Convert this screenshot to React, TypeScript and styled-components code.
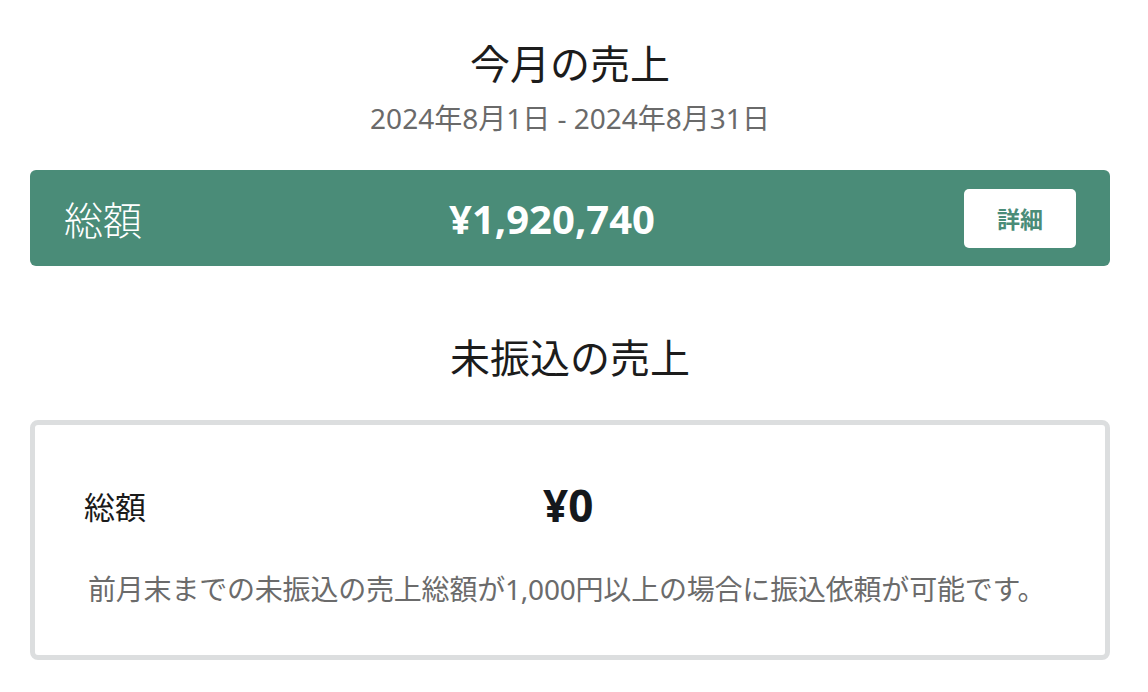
import styled, { createGlobalStyle } from "styled-components"

const GlobalStyle = createGlobalStyle`
  body {
    margin: 0;
    background: #ffffff;
    font-family: "Noto Sans", "Noto Sans CJK JP", sans-serif;
    color: #1a1a1a;
  }
`

const Page = styled.div`
  width: 1148px;
  height: 692px;
  box-sizing: border-box;
  padding: 0 38px 0 30px;
  display: flex;
  flex-direction: column;
  overflow: hidden;
`

const Section = styled.section<{ $top: number }>`
  display: flex;
  flex-direction: column;
  align-items: center;
  margin-top: ${(p) => p.$top}px;
`

const Title = styled.h1`
  margin: 0;
  font-size: 40px;
  font-weight: 400;
  line-height: 48px;
  color: #1c1c1c;
  font-family: "Noto Sans CJK JP", sans-serif;
`

const Period = styled.div`
  margin-top: 15px;
  font-size: 28px;
  line-height: 34px;
  color: #6a6a6a;
`

const TotalBar = styled.div`
  align-self: stretch;
  margin-top: 35px;
  height: 96px;
  border-radius: 6px;
  background: #4a8c78;
  display: grid;
  grid-template-columns: 1fr auto 1fr;
  align-items: center;
  padding: 0 34px;
  color: #ffffff;
`

const BarLabel = styled.span`
  font-family: "Noto Sans CJK JP", sans-serif;
  font-size: 39px;
  font-weight: 300;
`

const BarAmount = styled.span`
  font-size: 40px;
  font-weight: 700;
  transform: translateX(-18px);
`

const DetailButton = styled.button`
  justify-self: end;
  width: 112px;
  height: 59px;
  border: none;
  border-radius: 5px;
  background: #ffffff;
  color: #4a8c78;
  font-family: "Noto Sans CJK JP", sans-serif;
  font-size: 23px;
  font-weight: 700;
`

const Card = styled.div`
  align-self: stretch;
  margin-top: 40px;
  height: 240px;
  box-sizing: border-box;
  border: 5px solid #dcdedf;
  border-radius: 8px;
  padding: 50px 49px 0 49px;
`

const Row = styled.div`
  display: grid;
  grid-template-columns: 459px auto;
  align-items: center;
  height: 48px;
`

const RowLabel = styled.span`
  font-family: "Noto Sans CJK JP", sans-serif;
  font-size: 31px;
  color: #1a1a1a;
`

const RowValue = styled.span`
  font-size: 44px;
  font-weight: 700;
  color: #14181c;
`

const Note = styled.p`
  margin: 48px 0 0 4px;
  font-size: 28px;
  line-height: 36px;
  color: #6b6b6b;
  letter-spacing: -0.2px;
`

export default function App() {
  return (
    <>
      <GlobalStyle />
      <Page>
        <Section $top={38}>
          <Title>今月の売上</Title>
          <Period>2024年8月1日 - 2024年8月31日</Period>
        </Section>
        <TotalBar>
          <BarLabel>総額</BarLabel>
          <BarAmount>¥1,920,740</BarAmount>
          <DetailButton>詳細</DetailButton>
        </TotalBar>
        <Section $top={66}>
          <Title>未振込の売上</Title>
        </Section>
        <Card>
          <Row>
            <RowLabel>総額</RowLabel>
            <RowValue>¥0</RowValue>
          </Row>
          <Note>前月末までの未振込の売上総額が1,000円以上の場合に振込依頼が可能です。</Note>
        </Card>
      </Page>
    </>
  )
}
